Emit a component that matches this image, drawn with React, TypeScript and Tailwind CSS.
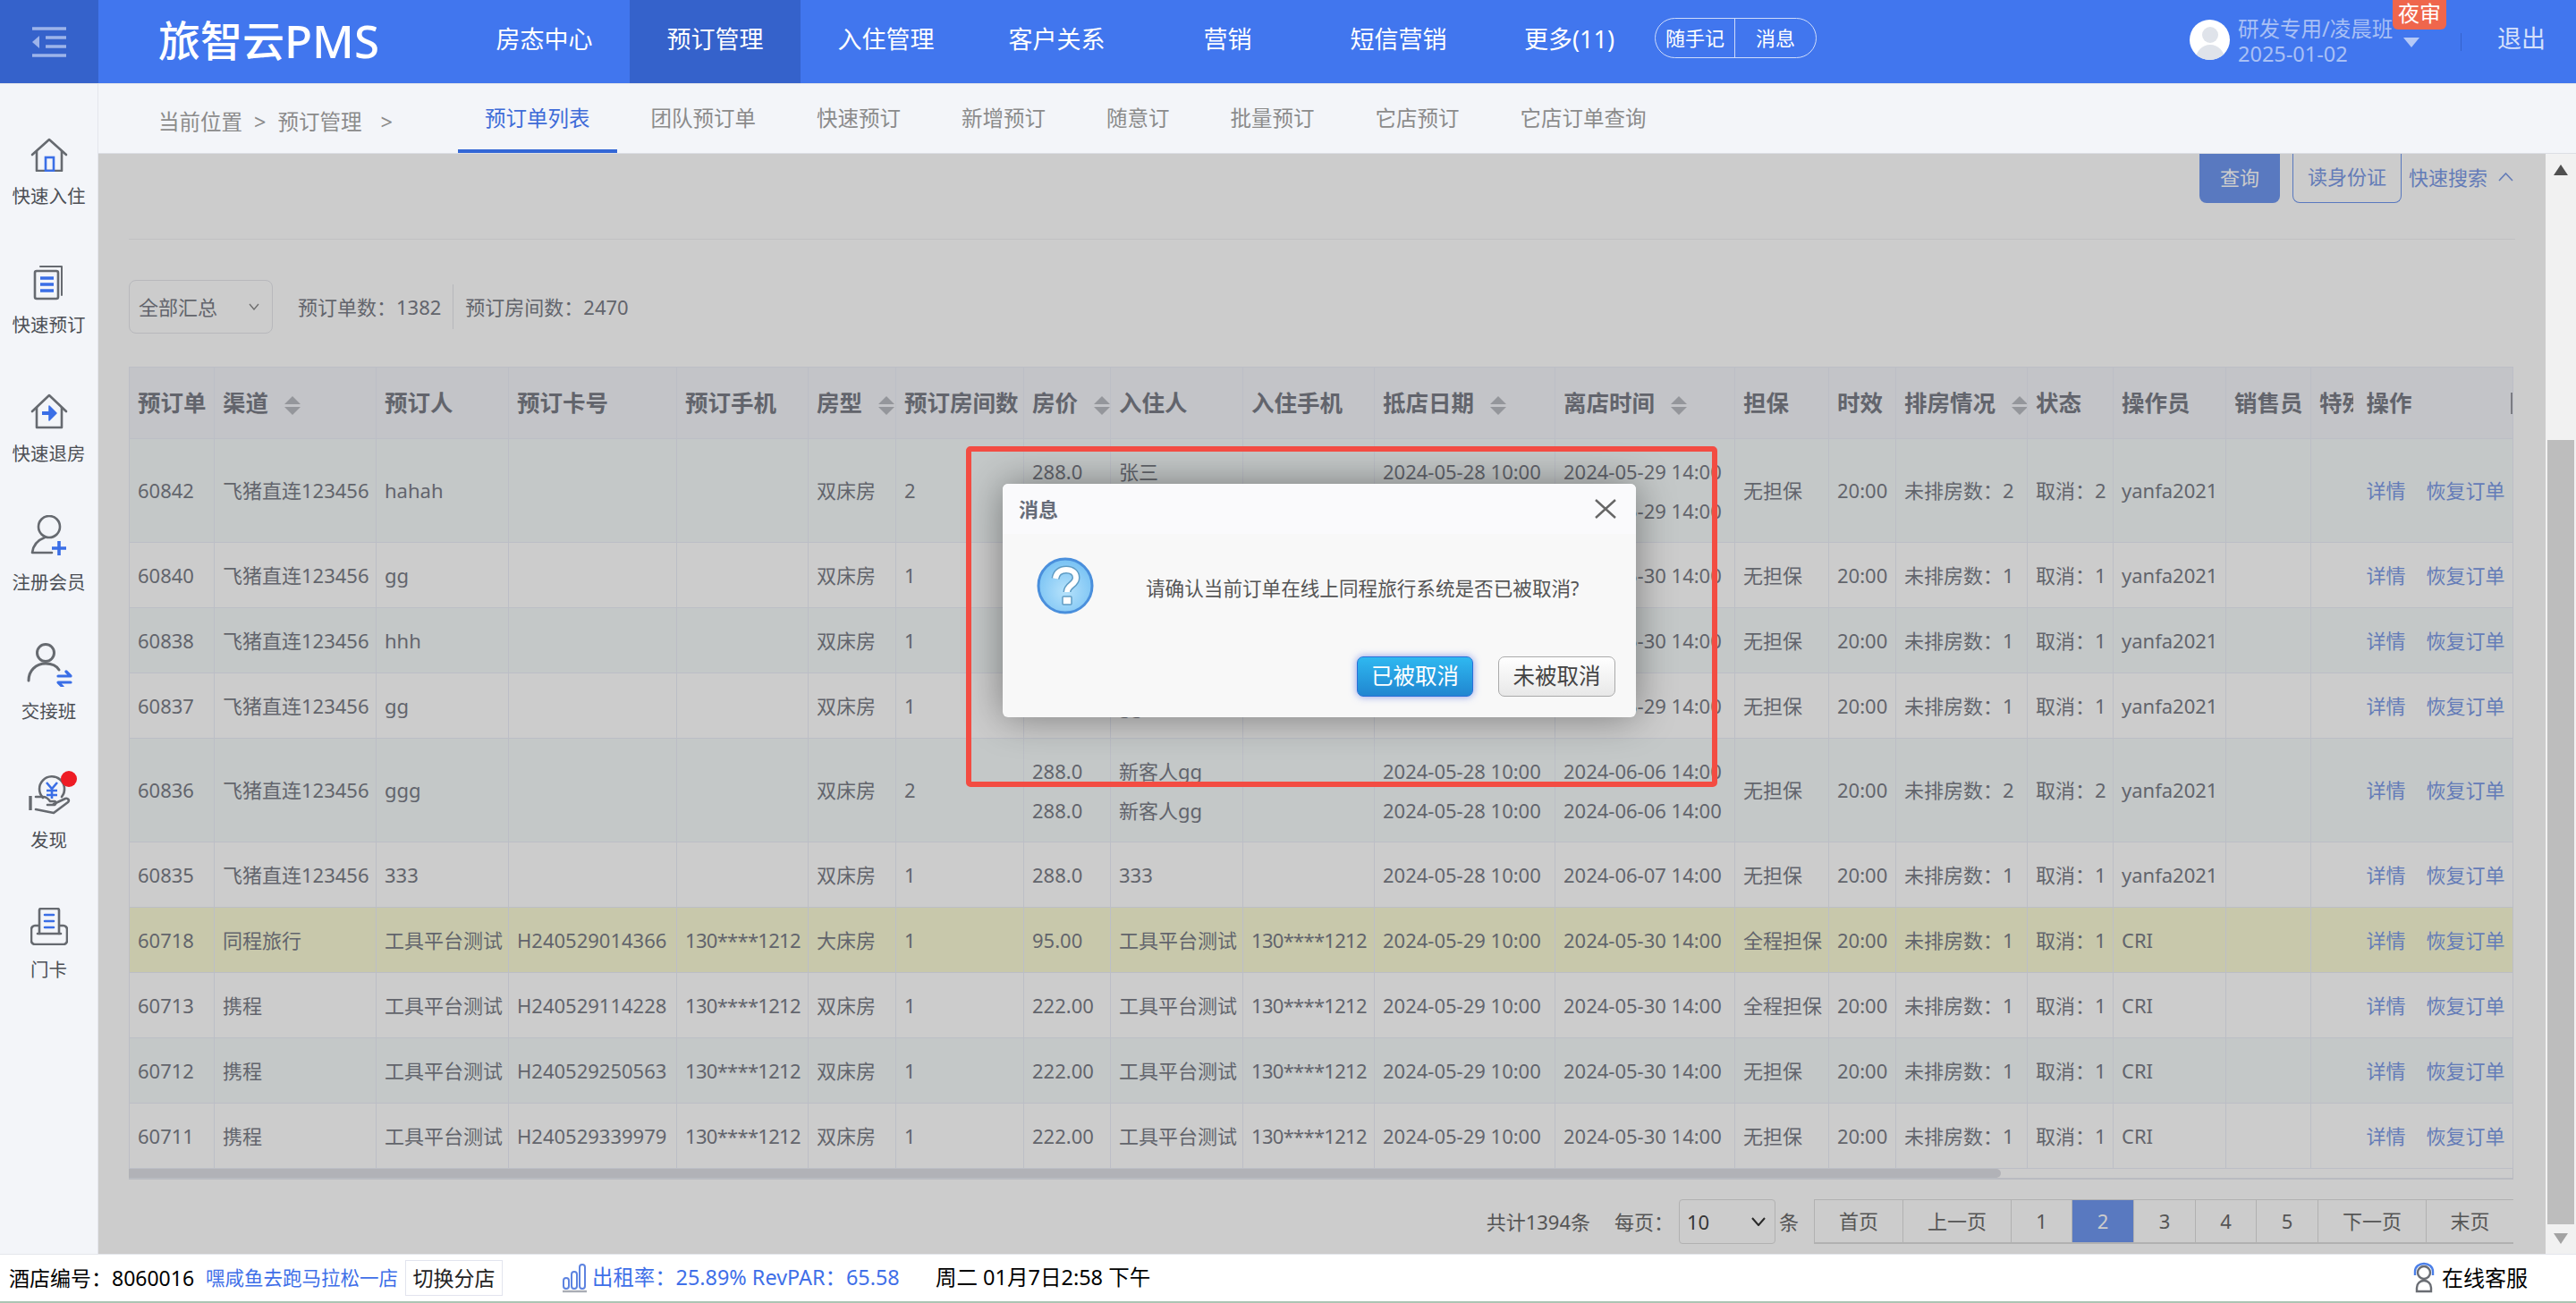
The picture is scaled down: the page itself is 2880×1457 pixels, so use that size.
import { ReactNode } from 'react'

const NAV = ['房态中心', '预订管理', '入住管理', '客户关系', '营销', '短信营销', '更多(11)']
const TABS = ['预订单列表', '团队预订单', '快速预订', '新增预订', '随意订', '批量预订', '它店预订', '它店订单查询']
const COLS = [95, 181, 148, 188, 147, 98, 143, 97, 148, 147, 202, 201, 105, 75, 147, 96, 126, 95, 47, 179]
const HEADS: [string, boolean][] = [
  ['预订单', false], ['渠道', true], ['预订人', false], ['预订卡号', false], ['预订手机', false], ['房型', true],
  ['预订房间数', false], ['房价', true], ['入住人', false], ['入住手机', false], ['抵店日期', true], ['离店时间', true],
  ['担保', false], ['时效', false], ['排房情况', true], ['状态', false], ['操作员', false], ['销售员', false], ['特殊', false],
]

type Row = {
  id: string; channel: string; booker: string; card?: string; phone?: string; room: string; count: string
  price: string[]; guest: string[]; guestPhone?: string; arrive: string[]; leave: string[]
  guarantee: string; op: string; highlight?: boolean
}

const feizhu = (id: string, booker: string, n: string, guest: string[], arrive: string[], leave: string[], price: string[]): Row => ({
  id, channel: '飞猪直连123456', booker, room: '双床房', count: n, price, guest, arrive, leave, guarantee: '无担保', op: 'yanfa2021',
})
const tool = (id: string, channel: string, card: string, room: string, price: string, guarantee: string, highlight = false): Row => ({
  id, channel, booker: '工具平台测试', card, phone: '130****1212', room, count: '1', price: [price], guest: ['工具平台测试'],
  guestPhone: '130****1212', arrive: ['2024-05-29 10:00'], leave: ['2024-05-30 14:00'], guarantee, op: 'CRI', highlight,
})

const ROWS: Row[] = [
  feizhu('60842', 'hahah', '2', ['张三', '张三'], ['2024-05-28 10:00', '2024-05-28 10:00'], ['2024-05-29 14:00', '2024-05-29 14:00'], ['288.0', '288.0']),
  feizhu('60840', 'gg', '1', ['gg'], ['2024-05-28 10:00'], ['2024-05-30 14:00'], ['288.0']),
  feizhu('60838', 'hhh', '1', ['hhh'], ['2024-05-28 10:00'], ['2024-05-30 14:00'], ['288.0']),
  feizhu('60837', 'gg', '1', ['gg'], ['2024-05-28 10:00'], ['2024-05-29 14:00'], ['288.0']),
  feizhu('60836', 'ggg', '2', ['新客人gg', '新客人gg'], ['2024-05-28 10:00', '2024-05-28 10:00'], ['2024-06-06 14:00', '2024-06-06 14:00'], ['288.0', '288.0']),
  feizhu('60835', '333', '1', ['333'], ['2024-05-28 10:00'], ['2024-06-07 14:00'], ['288.0']),
  tool('60718', '同程旅行', 'H240529014366', '大床房', '95.00', '全程担保', true),
  tool('60713', '携程', 'H240529114228', '双床房', '222.00', '全程担保'),
  tool('60712', '携程', 'H240529250563', '双床房', '222.00', '无担保'),
  tool('60711', '携程', 'H240529339979', '双床房', '222.00', '无担保'),
]

const PAGES = [
  { t: '首页', w: 'w-[99px]' }, { t: '上一页', w: 'w-[121px]' }, { t: '1', w: 'w-[68px]' }, { t: '2', w: 'w-[69px]', on: true },
  { t: '3', w: 'w-[69px]' }, { t: '4', w: 'w-[68px]' }, { t: '5', w: 'w-[69px]' }, { t: '下一页', w: 'w-[121px]' }, { t: '末页', w: 'w-[98px]' },
]

function Icon({ children, w = 44, h = 44 }: { children: ReactNode; w?: number; h?: number }) {
  return (
    <svg width={w} height={h} viewBox={`0 0 ${w} ${h}`} fill="none" stroke="#666a70" strokeWidth="2.6" strokeLinecap="round" strokeLinejoin="round">
      {children}
    </svg>
  )
}

const BLUE = '#3a6ee6'

const SIDE: { label: string; icon: ReactNode; dot?: boolean }[] = [
  {
    label: '快速入住',
    icon: (
      <Icon w={42} h={38}>
        <path d="M2 19 21 2l19 17" />
        <path d="M7 15v22h28V15" strokeLinecap="butt" />
        <rect x="17" y="22" width="9" height="15" stroke={BLUE} strokeWidth="2.6" strokeLinejoin="miter" />
      </Icon>
    ),
  },
  {
    label: '快速预订',
    icon: (
      <Icon h={40} w={40}>
        <rect x="4" y="7" width="26" height="31" rx="2" />
        <path d="M10 2h24v32" strokeWidth="2" />
        <path d="M10 15h15M10 22h15M10 29h15" stroke={BLUE} strokeWidth="3.6" strokeLinecap="butt" />
      </Icon>
    ),
  },
  {
    label: '快速退房',
    icon: (
      <Icon w={42} h={40}>
        <path d="M2 20 21 2l19 18" />
        <path d="M7 15v23h28V15" strokeLinecap="butt" />
        <path d="M13 22h13" stroke={BLUE} strokeWidth="4" strokeLinecap="butt" />
        <path d="m21 14 8 8-8 8z" fill={BLUE} stroke={BLUE} strokeWidth="1.5" />
      </Icon>
    ),
  },
  {
    label: '注册会员',
    icon: (
      <Icon h={48}>
        <ellipse cx="22" cy="13" rx="12" ry="12" />
        <path d="M17 25C9 28 4 34 3 42h22" />
        <path d="M33 29v16M25 37h16" stroke={BLUE} strokeWidth="3.6" strokeLinecap="butt" />
      </Icon>
    ),
  },
  {
    label: '交接班',
    icon: (
      <Icon w={54} h={50}>
        <circle cx="23" cy="12" r="9.5" strokeWidth="3" />
        <path d="M4 43C4 32 12 24 23 24c7 0 12 2 15 7" strokeWidth="3" />
        <path d="M37 38h14l-5-5M51 45H37l5 5" stroke={BLUE} strokeWidth="3.2" />
      </Icon>
    ),
  },
  {
    label: '发现',
    dot: true,
    icon: (
      <Icon w={48} h={46}>
        <path d="M17 26A14 14 0 1 1 38 25" />
        <path d="M21 9l6 7 6-7M27 16v11M21 18h12M21 23h12" stroke={BLUE} strokeWidth="2.6" strokeLinecap="butt" strokeLinejoin="miter" />
        <path d="M3 24v16" strokeWidth="3.4" strokeLinecap="butt" />
        <path d="M9 25h8c3 0 6 2 8 5h5c2 0 2 4-1 4h-7" />
        <path d="M29 33l13-6c3-1 5 2 3 4L29 43 9 39" />
      </Icon>
    ),
  },
  {
    label: '门卡',
    icon: (
      <Icon w={42} h={42}>
        <path d="M10 29V3a2 2 0 0 1 2-2h18a2 2 0 0 1 2 2v26" />
        <path d="M8 29h26" />
        <path d="M9 20H5c-2 0-4 2-4 4v13c0 2 2 4 4 4h32c2 0 4-2 4-4V24c0-2-2-4-4-4h-4" />
        <path d="M16 8h10M16 15h10M16 22h10" stroke={BLUE} strokeWidth="2.6" />
      </Icon>
    ),
  },
]

function Sort() {
  return (
    <span className="ml-[18px] inline-flex flex-col gap-[3px] align-middle">
      <span className="w-0 h-0 border-x-[9px] border-x-transparent border-b-[9px] border-b-[#b9bcc2]" />
      <span className="w-0 h-0 border-x-[9px] border-x-transparent border-t-[9px] border-t-[#b9bcc2]" />
    </span>
  )
}

function Lines({ items }: { items: string[] }) {
  return (
    <div className="flex flex-col gap-[12px]">
      {items.map((t, i) => <div key={i} className="h-[32px] leading-[32px]">{t}</div>)}
    </div>
  )
}

function OrderTable() {
  const cell = 'border border-[#eceef8] px-[9px] whitespace-nowrap overflow-hidden'
  return (
    <div className="mt-[37px] mx-[34px] w-[2666px] border-b-2 border-[#e8eaf2] border-r border-r-[#e8eaf2]">
      <table className="table-fixed w-[2665px] border-collapse text-[22px] text-[#7b7e88]">
        <colgroup>
          {COLS.map((w, i) => <col key={i} style={{ width: w }} />)}
        </colgroup>
        <thead>
          <tr className="h-[80px] bg-[#f4f6fb] text-[25.5px] font-bold text-left">
            {HEADS.map(([t, s]) => (
              <th key={t} className={`${cell} font-bold ${t === '特殊' ? 'border-r-0' : ''}`}>{t}{s && <Sort />}</th>
            ))}
            <th className={`${cell} border-l-0 font-bold pl-[15px] pr-0`}>
              <div className="flex justify-between items-center">操作<span className="h-[24px] w-[2px] bg-[#9a9ca3]" /></div>
            </th>
          </tr>
        </thead>
        <tbody>
          {ROWS.map((r, i) => (
            <tr key={r.id} className={`${r.price.length > 1 ? 'h-[116px]' : 'h-[73px]'} ${r.highlight ? 'bg-[#fafbd6]' : i % 2 === 0 ? 'bg-[#f5fafb]' : 'bg-white'}`}>
              <td className={cell}>{r.id}</td>
              <td className={cell}>{r.channel}</td>
              <td className={cell}>{r.booker}</td>
              <td className={cell}>{r.card}</td>
              <td className={`${cell} tracking-[-0.7px]`}>{r.phone}</td>
              <td className={cell}>{r.room}</td>
              <td className={cell}>{r.count}</td>
              <td className={cell}><Lines items={r.price} /></td>
              <td className={cell}><Lines items={r.guest} /></td>
              <td className={`${cell} tracking-[-0.7px]`}>{r.guestPhone}</td>
              <td className={cell}><Lines items={r.arrive} /></td>
              <td className={cell}><Lines items={r.leave} /></td>
              <td className={cell}>{r.guarantee}</td>
              <td className={cell}>20:00</td>
              <td className={cell}>未排房数：{r.count}</td>
              <td className={cell}>取消：{r.count}</td>
              <td className={cell}>{r.op}</td>
              <td className={cell} />
              <td className={`${cell} border-r-0`} />
              <td className={`${cell} border-l-0 pl-[15px] text-[#7d9be6]`}>
                <div className="flex gap-[23px]"><span>详情</span><span>恢复订单</span></div>
              </td>
            </tr>
          ))}
        </tbody>
      </table>
      <div className="h-[10px]">
        <div className="h-full w-[2093px] rounded-r-full bg-[#dedfe5]" />
      </div>
    </div>
  )
}

function Dialog() {
  return (
    <>
      <div className="absolute left-[1011px] top-[369px] w-[708px] h-[261px] rounded-[6px] bg-[#f8f8f8] shadow-[0_0_44px_rgba(0,0,0,0.4)] flex flex-col">
        <div className="h-[56px] flex items-center justify-between pl-[18px] pr-[22px] bg-[#fafafc] rounded-t-[6px]">
          <span className="text-[22px] font-bold text-[#666c78]">消息</span>
          <svg width="24" height="22" viewBox="0 0 24 22" stroke="#666" strokeWidth="2.4"><path d="M1 1l22 20M23 1 1 21" /></svg>
        </div>
        <div className="flex items-start pl-[38px] pt-[26px]">
          <svg width="64" height="66" viewBox="0 0 64 66">
            <defs>
              <radialGradient id="q" cx="50%" cy="60%" r="55%">
                <stop offset="0%" stopColor="#b6e2fb" />
                <stop offset="100%" stopColor="#7cc4f4" />
              </radialGradient>
            </defs>
            <circle cx="32" cy="32" r="30" fill="url(#q)" stroke="#4a8fdc" strokeWidth="3" />
            <path d="M21 24c1-7 6-10 12-10 7 0 11 4 11 9 0 8-10 8-10 16" fill="none" stroke="#5f9cc4" strokeWidth="9" />
            <path d="M21 24c1-7 6-10 12-10 7 0 11 4 11 9 0 8-10 8-10 16" fill="none" stroke="#fff" strokeWidth="6" />
            <rect x="29" y="44" width="10" height="9" rx="1" fill="#fff" stroke="#5f9cc4" strokeWidth="1.5" />
          </svg>
          <p className="ml-[58px] mt-[17px] text-[21.6px] leading-[36px] text-[#555] whitespace-nowrap">请确认当前订单在线上同程旅行系统是否已被取消?</p>
        </div>
        <div className="mt-[45px] flex justify-end gap-[28px] pr-[23px]">
          <button className="w-[130px] h-[45px] rounded-[7px] text-[24.5px] text-white bg-gradient-to-b from-[#2fb8f0] to-[#2186d0] border border-[#2a6fd8] shadow-[0_0_8px_rgba(60,90,220,0.6)]">已被取消</button>
          <button className="w-[131px] h-[45px] rounded-[7px] text-[24.5px] text-[#444] bg-gradient-to-b from-white to-[#e8e8e8] border border-[#aaa]">未被取消</button>
        </div>
      </div>
      <div className="absolute left-[970px] top-[327px] w-[840px] h-[381px] rounded-[5px] border-[6px] border-[#f34c42]" />
    </>
  )
}

export default function App() {
  return (
    <div className="w-[2880px] h-[1457px] flex flex-col overflow-hidden bg-white font-['Noto_Sans','Noto_Sans_CJK_SC',sans-serif]">
      {/* top bar */}
      <header className="h-[94px] flex items-stretch bg-[#4176ee] text-white border-b border-[#e3e5ea]">
        <div className="w-[110px] flex items-center justify-center bg-[#3562cb]">
          <svg width="40" height="34" viewBox="0 0 40 34" fill="none" stroke="#9db4ea" strokeWidth="3.4">
            <path d="M1 2h38M16 12h23M16 22h23M1 32h38" />
            <path d="M1 17l8-7v14z" fill="#9db4ea" stroke="none" />
          </svg>
        </div>
        <div className="w-[403px] pl-[67px] pb-[2px] flex items-center text-[47px] font-medium">旅智云<span className="text-[51px]">PMS</span></div>
        <nav className="flex">
          {NAV.map(t => (
            <div key={t} className={`w-[191px] pb-[4px] flex items-center justify-center text-[27px] ${t === '预订管理' ? 'bg-[#3562cb]' : ''}`}>{t}</div>
          ))}
        </nav>
        <div className="mt-[20px] h-[45px] w-[181px] flex rounded-full border border-[#cfdcfa] text-[22px]">
          <span className="w-[89px] flex items-center justify-center border-r border-[#cfdcfa]">随手记</span>
          <span className="flex-1 flex items-center justify-center">消息</span>
        </div>
        <div className="ml-[417px] flex items-start relative">
          <div className="mt-[22px] w-[45px] h-[45px] rounded-full bg-white overflow-hidden flex flex-col items-center">
            <span className="mt-[8px] w-[18px] h-[20px] rounded-full bg-[#dfe3ea]" />
            <span className="mt-[2px] w-[32px] h-[20px] rounded-t-full bg-[#dfe3ea]" />
          </div>
          <div className="ml-[9px] mt-[14px] w-[176px] text-[23.5px] leading-[28px] text-[#a9c0f5] whitespace-nowrap">
            <div className="h-[32px] leading-[36px]">研发专用/凌晨班</div>
            <div className="leading-[28px]">2025-01-02</div>
          </div>
          <span className="ml-[9px] mt-[42px] w-0 h-0 border-x-[9px] border-x-transparent border-t-[11px] border-t-[#b5c9f7]" />
          <span className="absolute left-[227px] top-0 w-[60px] h-[33px] rounded-b-[6px] bg-[#ef664c] text-[24px] leading-[30px] text-center text-white">夜审</span>
        </div>
        <span className="ml-[46px] mt-[37px] w-[1px] h-[20px] bg-[#3562cb]" />
        <span className="ml-[40px] mt-[24px] text-[27px] leading-[38px] text-[#d5e0fb]">退出</span>
      </header>

      <div className="flex-1 flex min-h-0">
        {/* left rail */}
        <aside className="w-[110px] pt-[50px] bg-[#f3f5f9] border-r border-[#e4e6ec]">
          {SIDE.map(s => (
            <div key={s.label} className="relative h-[144.1px] flex flex-col items-center">
              <div className="h-[48px] flex items-end">{s.icon}</div>
              <span className="mt-[11px] text-[20.5px] leading-[32px] text-[#4c4f55]">{s.label}</span>
              {s.dot && <span className="absolute left-[68px] top-[-2px] w-[18px] h-[18px] rounded-full bg-[#ee1c25]" />}
            </div>
          ))}
        </aside>

        <main className="flex-1 flex flex-col min-w-0">
          {/* breadcrumb and tabs */}
          <div className="h-[78px] flex items-stretch bg-[#f3f5f9] border-b border-[#dcdee4]">
            <div className="w-[402px] pl-[67px] pt-[24px] text-[23.5px] leading-[36px] text-[#8b8b8b] whitespace-nowrap">
              当前位置<span className="mx-[13px]">&gt;</span>预订管理<span className="ml-[21px]">&gt;</span>
            </div>
            <div className="flex gap-[8px]">
              {TABS.map((t, i) => (
                <div key={t} className={`px-[30px] pt-[20px] text-[23.5px] leading-[36px] whitespace-nowrap ${i === 0 ? 'text-[#3f6cd8] border-b-[4px] border-[#3367d6]' : 'text-[#8b8b8b]'}`}>{t}</div>
              ))}
            </div>
          </div>

          <div className="flex-1 flex min-h-0">
            <section className="relative w-[2736px] bg-white overflow-hidden">
              <div className="h-[55px] flex justify-end text-[22px]">
                <button className="w-[90px] pb-[3px] rounded-b-[8px] bg-[#7098f0] text-white">查询</button>
                <button className="ml-[14px] w-[122px] pb-[3px] rounded-b-[8px] border border-t-0 border-[#6f96ee] text-[#7d9be6]">读身份证</button>
                <span className="ml-[8px] mr-[36px] pb-[3px] flex items-center text-[#7d9be6]">
                  快速搜索
                  <svg className="ml-[12px]" width="17" height="10" viewBox="0 0 17 10" fill="none" stroke="#7d9be6" strokeWidth="1.6"><path d="M1 9l7.5-8L16 9" /></svg>
                </span>
              </div>
              <div className="mt-[40px] mx-[34px] border-t border-[#f2f2f4]" />
              <div className="mt-[45px] ml-[34px] flex items-center text-[22px] text-[#7b7e88]">
                <div className="w-[161px] h-[60px] pl-[10px] pr-[14px] flex items-center justify-between rounded-[8px] border border-[#e6e7ec]">
                  全部汇总
                  <svg width="12" height="8" viewBox="0 0 12 8" fill="none" stroke="#8b8b8b" strokeWidth="1.4"><path d="M1 1l5 6 5-6" /></svg>
                </div>
                <span className="ml-[28px]">预订单数：1382</span>
                <span className="ml-[13px] mr-[13px] h-[50px] w-[1px] bg-[#e4e5ea]" />
                <span>预订房间数：2470</span>
              </div>

              <OrderTable />

              <div className="mt-[22px] mr-[36px] flex justify-end items-center text-[22px] text-[#6b6b6b]">
                <span>共计1394条</span>
                <span className="ml-[27px]">每页：</span>
                <div className="ml-[6px] w-[108px] h-[50px] pl-[8px] pr-[10px] flex items-center justify-between rounded-[4px] border border-[#dedede] text-[#444]">
                  10
                  <svg width="16" height="10" viewBox="0 0 16 10" fill="none" stroke="#333" strokeWidth="2"><path d="M1 1l7 8 7-8" /></svg>
                </div>
                <span className="ml-[4px] mr-[17px]">条</span>
                <div className="flex h-[50px] border-b-2 border-[#dedede]">
                  {PAGES.map(p => (
                    <span key={p.t} className={`${p.w} flex items-center justify-center border-l border-t border-[#dedede] ${p.on ? 'bg-[#7098f0] text-white' : ''}`}>{p.t}</span>
                  ))}
                </div>
              </div>

              {/* mask behind the dialog */}
              <div className="absolute inset-0 bg-black/20" />
              <Dialog />
            </section>

            {/* page scrollbar */}
            <div className="w-[34px] bg-[#f1f1f1] flex flex-col items-center">
              <span className="mt-[12px] w-0 h-0 border-x-[8px] border-x-transparent border-b-[12px] border-b-[#505050]" />
              <div className="mt-[296px] w-[30px] h-[877px] bg-[#bdbdbd]" />
              <span className="mt-[10px] w-0 h-0 border-x-[8px] border-x-transparent border-t-[12px] border-t-[#a3a3a3]" />
            </div>
          </div>
        </main>
      </div>

      {/* status bar */}
      <footer className="h-[55px] shrink-0 flex items-center bg-white border-t border-[#e4e6ec] border-b-2 border-b-[#abc4b3] text-[23px] text-black whitespace-nowrap">
        <span className="ml-[10px] w-[208px]">酒店编号：8060016</span>
        <span className="ml-[12px] w-[223px] text-[21.5px] text-[#3f6fe8]">嘿咸鱼去跑马拉松一店</span>
        <span className="w-[109px] h-[40px] flex items-center justify-center border border-[#e2e4ee] text-[#222]">切换分店</span>
        <svg className="ml-[66px]" width="30" height="34" viewBox="0 0 30 34" fill="none" stroke="#5d83e0" strokeWidth="2">
          <rect x="2" y="17" width="6" height="12" rx="3" />
          <rect x="11" y="10" width="6" height="19" rx="3" />
          <rect x="20" y="2" width="6" height="27" rx="3" />
          <path d="M1 32h27" stroke="#a9adb5" strokeWidth="2.4" />
        </svg>
        <span className="ml-[4px] w-[384px] text-[23.4px] text-[#3f6fe8]">出租率：25.89% RevPAR：65.58</span>
        <span className="text-[23.5px]">周二 01月7日2:58 下午</span>
        <svg className="ml-auto" width="26" height="36" viewBox="0 0 26 36" fill="none" strokeWidth="2.4">
          <circle cx="13" cy="12" r="7" stroke="#6a6d73" />
          <path d="M3 15V11C3 5 8 2 13 2s10 3 10 9v4" stroke="#4a7ee8" />
          <path d="M5 33v-4c0-5 4-8 8-8s8 3 8 8v4z" stroke="#6a6d73" />
        </svg>
        <span className="ml-[7px] mr-[54px] text-[24px]">在线客服</span>
      </footer>
    </div>
  )
}
